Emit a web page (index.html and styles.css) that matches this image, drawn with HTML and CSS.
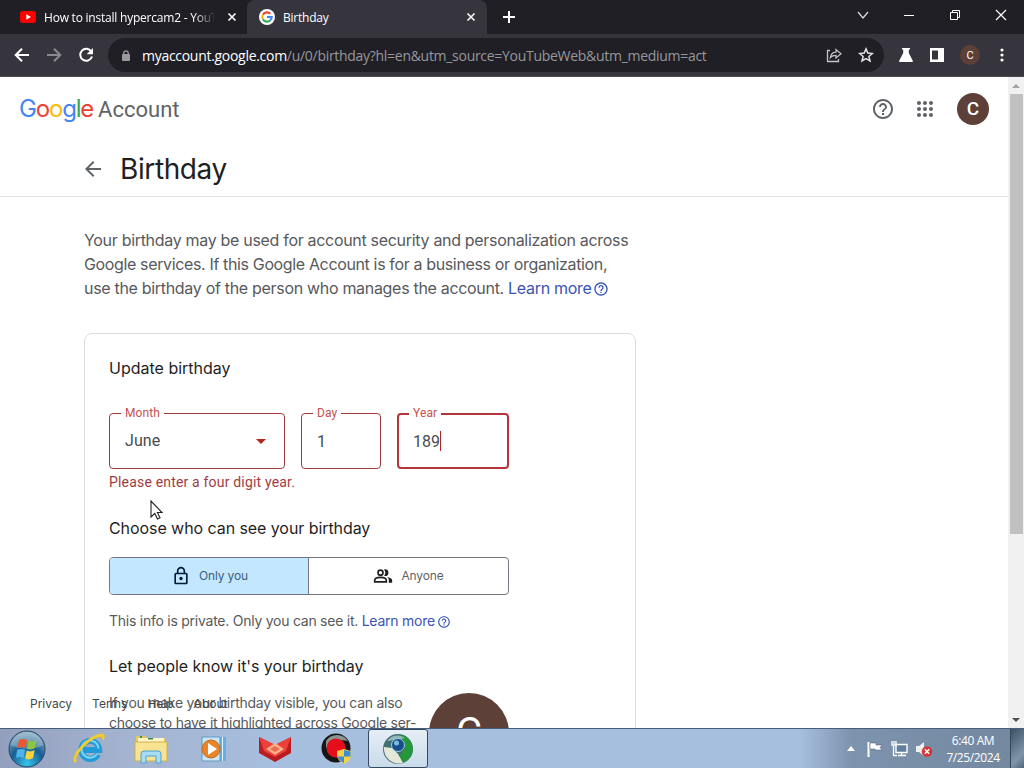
FILE: index.html
```html
<!DOCTYPE html>
<html lang="en">
<head>
	<meta charset="UTF-8" />
	<title>Birthday</title>
	<link rel="stylesheet" href="styles.css">
</head>
<body>
	<div class="tabs">
		<div class="tab">
			<svg class="favicon" width="16" height="16" viewBox="0 0 16 16"><rect y="2" width="16" height="12" rx="3" fill="#f00"/><path d="M6.3 5.3v5.4L11 8z" fill="#fff"/></svg>
			<span class="tab-name tab-cut">How to install hypercam2 - YouTube</span>
			<svg class="tab-close" width="10" height="10" viewBox="0 0 10 10"><path d="M1.500 1.500l7 7M8.500 1.500l-7 7" stroke="#fff" stroke-width="1.600"/></svg>
		</div>
		<div class="tab active">
			<svg class="favicon" width="16" height="16" viewBox="0 0 16 16"><circle cx="8" cy="8" r="8" fill="#fff"/><g fill="none" stroke-width="2.200"><path d="M11.300 4.700A4.700 4.700 0 0 0 3.900 5.700" stroke="#ea4335"/><path d="M3.900 5.700a4.700 4.700 0 0 0 0 4.600" stroke="#fbbc05"/><path d="M3.900 10.300a4.700 4.700 0 0 0 7.200 1.200" stroke="#34a853"/><path d="M11.100 11.500A4.700 4.700 0 0 0 12.700 8H8" stroke="#4285f4"/></g></svg>
			<span class="tab-name">Birthday</span>
			<svg class="tab-close" width="10" height="10" viewBox="0 0 10 10"><path d="M1.500 1.500l7 7M8.500 1.500l-7 7" stroke="#fff" stroke-width="1.600"/></svg>
		</div>
		<svg class="new-tab" width="12" height="12" viewBox="0 0 12 12"><path d="M6 0v12M0 6h12" stroke="#fff" stroke-width="2"/></svg>
		<div class="window-buttons">
			<svg width="12" height="12" viewBox="0 0 12 12"><path d="M1 3l5 6 5-6" fill="none" stroke="#ddd" stroke-width="1.200"/></svg>
			<svg width="12" height="12" viewBox="0 0 12 12"><path d="M1 6.500h10" stroke="#fff"/></svg>
			<svg width="12" height="12" viewBox="0 0 12 12"><path d="M1.500 3.500h7v7h-7zM3.500 3.500v-2h7v7h-2" fill="none" stroke="#fff"/></svg>
			<svg width="12" height="12" viewBox="0 0 12 12"><path d="M1 1l10 10M11 1L1 11" stroke="#fff" stroke-width="1.200"/></svg>
		</div>
	</div>

	<div class="toolbar">
		<div class="nav">
			<svg width="16" height="16" viewBox="0 0 16 16"><path d="M15 8H2M8 1.700L1.700 8 8 14.300" fill="none" stroke="#fff" stroke-width="2"/></svg>
			<svg width="16" height="16" viewBox="0 0 16 16"><path d="M1 8h13M8 1.700L14.300 8 8 14.300" fill="none" stroke="#8a8a8e" stroke-width="2"/></svg>
			<svg width="16" height="16" viewBox="0 0 16 16"><path d="M13.300 4.500A6 6 0 1 0 14 9.500" fill="none" stroke="#fff" stroke-width="2"/><path d="M15 1v6.300H8.700z" fill="#fff"/></svg>
		</div>
		<div class="address">
			<svg class="lock" width="8" height="11" viewBox="0 0 8 11"><rect y="4" width="8" height="7" rx="1" fill="#9b9b9f"/><path d="M1.800 5V3a2.200 2.200 0 0 1 4.400 0v2" fill="none" stroke="#9b9b9f" stroke-width="1.300"/></svg>
			<span class="url"><b>myaccount.google.com</b>/u/0/birthday?hl=en&amp;utm_source=YouTubeWeb&amp;utm_medium=act</span>
			<svg class="share" width="16" height="16" viewBox="0 0 16 16"><path d="M4 3.500H1.500v11h11V12" fill="none" stroke="#c4c4c8" stroke-width="1.300"/><path d="M4.300 10.500C5 7 7 5.200 10 5.200V2.500L15 6.800 10 11V8.300c-2.500 0-4.300.6-5.700 2.200z" fill="none" stroke="#c4c4c8" stroke-width="1.200"/></svg>
			<svg width="16" height="16" viewBox="0 0 16 16"><path d="M8 1.900l1.800 4.200 4.600.4-3.500 3 1.100 4.500-4-2.400L4 14l1.100-4.500-3.500-3 4.600-.4z" fill="none" stroke="#e3e3e6" stroke-width="1.500"/></svg>
		</div>
		<div class="extensions">
			<svg width="16" height="16" viewBox="0 0 16 16"><path d="M4 1h8v1.500h-1.200V6l3.900 7.500c.5 1-.1 1.500-1 1.500H2.300c-.9 0-1.500-.5-1-1.500L5.200 6V2.500H4z" fill="#fff"/></svg>
			<svg width="16" height="16" viewBox="0 0 16 16"><path d="M1 1h14v14H1z" fill="#fff"/><path d="M3 3.500h6v9H3z" fill="#36353d"/></svg>
			<span class="small-avatar">C</span>
			<svg width="16" height="16" viewBox="0 0 16 16" fill="#fff"><circle cx="8" cy="3" r="1.600"/><circle cx="8" cy="8" r="1.600"/><circle cx="8" cy="13" r="1.600"/></svg>
		</div>
	</div>

	<div class="viewport">
		<div class="page">
			<header class="header">
				<div class="logo"><span class="google"><i class="blue">G</i><i class="red">o</i><i class="yellow">o</i><i class="blue">g</i><i class="green">l</i><i class="red">e</i></span><span class="account">Account</span></div>
				<div class="header-icons">
					<svg width="24" height="24" viewBox="0 0 24 24" fill="#5f6368"><path d="M11 18h2v-2h-2v2zm1-16C6.480 2 2 6.480 2 12s4.480 10 10 10 10-4.480 10-10S17.520 2 12 2zm0 18c-4.410 0-8-3.590-8-8s3.590-8 8-8 8 3.590 8 8-3.590 8-8 8zm0-14c-2.210 0-4 1.790-4 4h2c0-1.100.9-2 2-2s2 .9 2 2c0 2-3 1.750-3 5h2c0-2.250 3-2.500 3-5 0-2.210-1.790-4-4-4z"/></svg>
					<svg width="24" height="24" viewBox="0 0 24 24" fill="#5f6368"><path d="M6,8c1.100,0 2,-0.900 2,-2s-0.900,-2 -2,-2 -2,0.900 -2,2 0.900,2 2,2zM12,20c1.100,0 2,-0.900 2,-2s-0.900,-2 -2,-2 -2,0.900 -2,2 0.900,2 2,2zM6,20c1.100,0 2,-0.900 2,-2s-0.900,-2 -2,-2 -2,0.900 -2,2 0.900,2 2,2zM6,14c1.100,0 2,-0.900 2,-2s-0.900,-2 -2,-2 -2,0.900 -2,2 0.900,2 2,2zM12,14c1.100,0 2,-0.900 2,-2s-0.900,-2 -2,-2 -2,0.900 -2,2 0.900,2 2,2zM16,6c0,1.100 0.900,2 2,2s2,-0.900 2,-2 -0.900,-2 -2,-2 -2,0.900 -2,2zM12,8c1.100,0 2,-0.900 2,-2s-0.900,-2 -2,-2 -2,0.900 -2,2 0.900,2 2,2zM18,14c1.100,0 2,-0.900 2,-2s-0.900,-2 -2,-2 -2,0.900 -2,2 0.900,2 2,2zM18,20c1.100,0 2,-0.900 2,-2s-0.900,-2 -2,-2 -2,0.900 -2,2 0.900,2 2,2z"/></svg>
					<span class="avatar">C</span>
				</div>
			</header>
			<div class="title-row">
				<svg width="24" height="24" viewBox="0 0 24 24"><path d="M20 11H7.830l5.590-5.590L12 4l-8 8 8 8 1.410-1.410L7.830 13H20v-2z" fill="#5f6368"/></svg>
				<h1>Birthday</h1>
			</div>

			<main>
				<p class="intro">Your birthday may be used for account security and personalization across<br><span class="tight">Google services. If this Google Account is for a business or organization,</span><br>use the birthday of the person who manages the account. <a>Learn more</a><svg class="help" width="16" height="16" viewBox="0 0 24 24"><path d="M11 18h2v-2h-2v2zm1-16C6.480 2 2 6.480 2 12s4.480 10 10 10 10-4.480 10-10S17.520 2 12 2zm0 18c-4.410 0-8-3.590-8-8s3.590-8 8-8 8 3.590 8 8-3.590 8-8 8zm0-14c-2.210 0-4 1.790-4 4h2c0-1.100.9-2 2-2s2 .9 2 2c0 2-3 1.750-3 5h2c0-2.250 3-2.500 3-5 0-2.210-1.790-4-4-4z"/></svg></p>

				<section class="card">
					<h2 class="h-update">Update birthday</h2>
					<div class="fields">
						<div class="field month"><label>Month</label><span>June</span><i class="arrow"></i></div>
						<div class="field day"><label>Day</label><span>1</span></div>
						<div class="field year"><label>Year</label><span>189</span><i class="caret"></i></div>
					</div>
					<div class="error">Please enter a four digit year.</div>

					<h2 class="h-choose">Choose who can see your birthday</h2>
					<div class="switch">
						<div class="option selected">
							<svg width="20" height="20" viewBox="0 0 24 24" fill="#001d35"><path d="M18 8h-1V6c0-2.760-2.240-5-5-5S7 3.240 7 6v2H6c-1.100 0-2 .9-2 2v10c0 1.100.9 2 2 2h12c1.100 0 2-.9 2-2V10c0-1.100-.9-2-2-2zM9 6c0-1.660 1.340-3 3-3s3 1.340 3 3v2H9V6zm9 14H6V10h12v10zm-6-3c1.100 0 2-.9 2-2s-.9-2-2-2-2 .9-2 2 .9 2 2 2z"/></svg>
							<span>Only you</span>
						</div>
						<div class="option">
							<svg width="20" height="20" viewBox="0 0 24 24"><g fill="none" stroke="#1f1f1f" stroke-width="2"><circle cx="9" cy="8" r="3"/><path d="M2 19v-1.700C2 14.500 6 13.700 9 13.700s7 .8 7 3.600V19z"/></g><path d="M14.500 12a4 4 0 0 0 0-8c-.5 0-.9.1-1.300.2a6 6 0 0 1 0 7.600c.4.100.8.200 1.300.200zM17 13.300c1.300.9 2 2.200 2 4V20h4v-2.700c0-2.200-3-3.500-6-4z" fill="#1f1f1f"/></svg>
							<span>Anyone</span>
						</div>
					</div>
					<p class="info">This info is private. Only you can see it. <a>Learn more</a><svg class="help" width="14" height="14" viewBox="0 0 24 24"><path d="M11 18h2v-2h-2v2zm1-16C6.480 2 2 6.480 2 12s4.480 10 10 10 10-4.480 10-10S17.520 2 12 2zm0 18c-4.410 0-8-3.590-8-8s3.590-8 8-8 8 3.590 8 8-3.590 8-8 8zm0-14c-2.210 0-4 1.790-4 4h2c0-1.100.9-2 2-2s2 .9 2 2c0 2-3 1.750-3 5h2c0-2.250 3-2.500 3-5 0-2.210-1.790-4-4-4z"/></svg></p>

					<h2 class="h-let">Let people know it's your birthday</h2>
					<div class="highlight">
						<p>If you make your birthday visible, you can also<br>choose to have it highlighted across Google ser-</p>
						<span class="big-avatar">C</span>
					</div>
				</section>
			</main>

			<footer class="footer"><a>Privacy</a><a>Terms</a><a>Help</a><a>About</a></footer>
			<!-- mouse pointer -->
			<svg class="pointer" width="14" height="22" viewBox="0 0 14 22"><path d="M1 1v16l3.800-3.500L7.500 19l2.500-1.200-2.600-5.300H12z" fill="#fff" stroke="#222" stroke-width="1.100"/></svg>
		</div>
		<div class="scrollbar">
			<i class="up"></i>
			<div class="thumb"></div>
			<i class="down"></i>
		</div>
	</div>

	<div class="taskbar">
		<div class="task start">
			<svg width="38" height="38" viewBox="0 0 38 38">
				<defs>
					<radialGradient id="orb" cx=".5" cy=".9" r=".9"><stop offset="0" stop-color="#35c6ee"/><stop offset=".5" stop-color="#175d92"/><stop offset="1" stop-color="#8fb0c4"/></radialGradient>
				</defs>
				<circle cx="19" cy="19" r="18" fill="url(#orb)" stroke="#254968"/>
				<path d="M2.500 15a17 17 0 0 1 33 0c-9 5-22 5-33 0z" fill="#fff" opacity=".25"/>
				<path d="M11 10q4-2 8 0l-1.500 8q-4-2-8 0z" fill="#f0562b"/><path d="M20.500 10.500q4 2 8-.5L27 18q-4 2.500-8 .5z" fill="#8cc63e"/>
				<path d="M9 20q4-2 8 0l-1.500 8q-4-2-7.500 0z" fill="#4fb3ec"/><path d="M18.700 20.500q4 2 8-.5L25 28q-4 2.500-7.800.5z" fill="#fdd23c"/>
			</svg>
		</div>
		<div class="task">
			<svg width="34" height="32" viewBox="0 0 34 32"><path d="M26 21.500A9 9 0 1 1 27.200 17H12" fill="none" stroke="#239bd8" stroke-width="6"/><path d="M25 21A8.500 8.500 0 1 1 26.500 15.500" fill="none" stroke="#7bd6f6" stroke-width="2"/><path d="M4 29C-2 24 17 3 30 2c2 .3 1.500 3 .5 4.500" fill="none" stroke="#f1ca2d" stroke-width="2.800"/></svg>
		</div>
		<div class="task">
			<svg width="34" height="32" viewBox="0 0 34 32"><path d="M2 5V3h9l2 2h18v23H2z" fill="#e4c763"/><path d="M4 5h26v8H4z" fill="#fff7c6"/><path d="M1 9h32v19H1z" fill="#f8e392" stroke="#cfb04f"/><path d="M7 30v-9q0-3 3-3h14q3 0 3 3v9h-5v-7H12v7z" fill="#a7dcf5" stroke="#4da1d0"/><path d="M6 3h2v2H6zM14 5h5v1.500h-5z" fill="#3a8d46"/></svg>
		</div>
		<div class="task">
			<svg width="32" height="30" viewBox="0 0 32 30"><path d="M8 3h21v24H8z" fill="#66afe0"/><path d="M5 3h18v24H5z" fill="#c9e6f8" stroke="#609abf"/><path d="M25.500 3v24" stroke="#e5f5ff"/><circle cx="14" cy="15" r="9" fill="#e98526" stroke="#c46b1e"/><path d="M11 9v12l9-6z" fill="#fff"/></svg>
		</div>
		<div class="task">
			<svg width="34" height="28" viewBox="0 0 34 28"><path d="M1 2l16 8 16-8v16L17 27 1 18z" fill="#b91d22"/><path d="M1 2l16 8 16-8-5 14-11 6-11-6z" fill="#ec4138"/><path d="M8 14l9-6 9 6-9 6z" fill="#ffb08a"/><path d="M12 14l5-3 5 3-5 3z" fill="#e96b50"/></svg>
		</div>
		<div class="task">
			<svg width="32" height="32" viewBox="0 0 32 32"><circle cx="15" cy="15" r="14.500" fill="#171717"/><path d="M5 8A13 13 0 0 1 27 8q-11-3-22 7z" fill="#8b9692"/><circle cx="15" cy="15" r="9.500" fill="#e80d1a"/><path d="M23 16l7 2v5q-1 5-7 8-6-3-7-8v-5z" fill="#f1d34a"/><path d="M23 17v6.500h6.500V18.500zM23 23.500V30q-5-2.500-6.300-6.500z" fill="#3e8cd4"/></svg>
		</div>
		<div class="task open">
			<svg width="32" height="32" viewBox="0 0 32 32"><circle cx="16" cy="16" r="15" fill="#416f74"/><path d="M17 2a14 14 0 0 1 5 27l-6-3 7-11z" fill="#26983b"/><path d="M2 14l8 1 6 6 5 9A15 15 0 0 1 2 14z" fill="#e5e7d9"/><path d="M5 8Q13-1 23 5L14 7z" fill="#91b7b6"/><circle cx="16" cy="12" r="6.500" fill="#174f8b" stroke="#9fcbdc"/><circle cx="14.500" cy="10" r="2.500" fill="#7eb9e4"/></svg>
		</div>
		<div class="tray">
			<svg width="8" height="5" viewBox="0 0 8 5"><path d="M0 5l4-5 4 5z" fill="#fff"/></svg>
			<svg class="flag" width="18" height="16" viewBox="0 0 18 16"><path d="M2.500 1v15" stroke="#fff" stroke-width="2"/><path d="M4 2h6v2h6l-2 2.500L16 9H9V8H4z" fill="#fff" stroke="#455b70" stroke-width=".5"/></svg>
			<svg class="network" width="17" height="17" viewBox="0 0 17 17"><path d="M5 4.500h11v8H5z" fill="#5f7f9c" stroke="#fff" stroke-width="1.400"/><path d="M10.500 13v2.500M7 15.500h8M2.500 6v9.500H6M1 1v4h4V1M3 1v3" fill="none" stroke="#fff" stroke-width="1.300"/></svg>
			<svg class="sound" width="17" height="16" viewBox="0 0 17 16"><path d="M0 5h3l5-4v14l-5-4H0z" fill="#eee"/><circle cx="11" cy="10.500" r="5.300" fill="#d4363a"/><path d="M8.800 8.300l4.400 4.400M13.200 8.300l-4.400 4.400" stroke="#fff" stroke-width="1.500"/></svg>
			<div class="clock"><span>6:40 AM</span><span>7/25/2024</span></div>
			<div class="show-desktop"></div>
		</div>
	</div>
</body>
</html>
```
FILE: styles.css
```css
* {
	box-sizing: border-box;
}

body {
	margin: 0;
	height: 768px;
	display: flex;
	flex-direction: column;
	overflow: hidden;
	background: #fff;
	color: #1f1f1f;
	font-family: Inter, "Liberation Sans", sans-serif;
}

svg {
	display: block;
	flex: none;
}

h1, h2, p {
	margin: 0;
	font-weight: 400;
}

i {
	font-style: normal;
}

/* browser window */
.tabs {
	height: 34px;
	flex: none;
	display: flex;
	align-items: center;
	background: #201f26;
	color: #fff;
	font: 500 12px "Open Sans", sans-serif;
	letter-spacing: -0.22px;
}

.tab {
	width: 247px;
	height: 34px;
	padding: 0 11px 0 20px;
	display: flex;
	align-items: center;
}

.tab.active {
	width: 240px;
	padding: 0 11px 0 12px;
	background: #36353d;
	border-radius: 8px 8px 0 0;
}

.tab-name {
	flex: 1;
	margin-left: 8px;
	white-space: nowrap;
	overflow: hidden;
}

.tab-cut {
	flex: none;
	width: 170px;
	margin-right: 13px;
	-webkit-mask-image: linear-gradient(90deg, #000 150px, transparent 172px);
	mask-image: linear-gradient(90deg, #000 150px, transparent 172px);
}

.new-tab {
	margin-left: 16px;
}

.window-buttons {
	margin-left: auto;
	margin-right: 17px;
	margin-bottom: 5px;
	display: flex;
	gap: 34px;
}

.toolbar {
	height: 43px;
	flex: none;
	display: flex;
	align-items: center;
	background: #36353d;
	border-bottom: 1px solid #4b4a51;
}

.nav {
	width: 108px;
	padding-left: 14px;
	display: flex;
	gap: 16px;
}

.address {
	width: 776px;
	height: 34px;
	padding: 0 10px 0 14px;
	display: flex;
	align-items: center;
	border-radius: 17px;
	background: #201f26;
	font: 14px "Open Sans", sans-serif;
	letter-spacing: -0.29px;
	color: #97979b;
}

.url {
	margin-left: 12px;
	white-space: nowrap;
}

.url b {
	font-weight: 400;
	color: #fff;
}

.share {
	margin-left: auto;
	margin-right: 16px;
}

.extensions {
	display: flex;
	align-items: center;
	margin-left: 14px;
	gap: 15px;
}

.small-avatar, .avatar, .big-avatar {
	display: flex;
	align-items: center;
	justify-content: center;
	flex: none;
	border-radius: 50%;
	background: #5d4037;
	color: #fff;
	font-family: Roboto, sans-serif;
}

.small-avatar {
	width: 20px;
	height: 20px;
	font-size: 11px;
	margin-right: -1px;
}

/* account page */
.viewport {
	flex: 1;
	min-height: 0;
	display: flex;
}

.page {
	position: relative;
	width: 1008px;
	height: 651px;
	overflow: hidden;
}

.header {
	height: 64px;
	padding: 0 19px 1px;
	display: flex;
	align-items: center;
	justify-content: space-between;
}

.logo {
	display: flex;
	align-items: baseline;
	gap: 5px;
	color: #5f6368;
	font-size: 22px;
}

.google {
	font-size: 24px;
	letter-spacing: -1.2px;
}

.account {
	font-family: Roboto, sans-serif;
}

.blue { color: #4285f4; }
.red { color: #ea4335; }
.yellow { color: #fbbc05; }
.green { color: #34a853; }

.header-icons {
	display: flex;
	align-items: center;
	gap: 18px;
}

.avatar {
	width: 32px;
	height: 32px;
	margin-left: 2px;
	font-size: 19px;
	font-weight: 500;
}

.title-row {
	height: 56px;
	padding-left: 81px;
	display: flex;
	align-items: center;
	gap: 15px;
	border-bottom: 1px solid #dfe1e5;
}

h1 {
	font-size: 28px;
	letter-spacing: -0.4px;
}

.intro {
	padding: 31px 0 0 84px;
	height: 136px;
	font-size: 16px;
	line-height: 24px;
	letter-spacing: -0.31px;
	white-space: nowrap;
}

.tight {
	letter-spacing: -0.36px;
}

.intro, .info, .highlight p {
	color: #57595c;
}

a {
	color: #3a54b4;
}

.help {
	display: inline-block;
	vertical-align: -3px;
	margin-left: 2px;
	fill: #3a54b4;
}

.card {
	margin-left: 84px;
	width: 552px;
	height: 500px;
	padding: 22px 24px;
	border: 1px solid #dadce0;
	border-radius: 8px;
}

h2 {
	font-size: 16px;
	line-height: 24px;
	letter-spacing: -0.07px;
	white-space: nowrap;
}

.h-update {
	letter-spacing: 0;
}

.fields {
	display: flex;
	gap: 16px;
	margin-top: 33px;
	font-family: Roboto, sans-serif;
}

.field {
	position: relative;
	height: 56px;
	padding: 0 15px;
	display: flex;
	align-items: center;
	border: 1px solid #a33a3a;
	border-radius: 4px;
	font-size: 16px;
	color: #4a4c50;
}

.field label {
	position: absolute;
	top: -9px;
	left: 11px;
	padding: 0 4px;
	background: #fff;
	color: #c5504e;
	font-size: 12px;
	line-height: 16px;
	letter-spacing: 0.1px;
}

.month {
	width: 176px;
	justify-content: space-between;
}

.month span {
	padding-bottom: 2px;
	letter-spacing: 0.1px;
}

.day {
	width: 80px;
}

.year {
	width: 112px;
	padding: 0 14px;
	border: 2px solid #b6353d;
}

.year label {
	top: -10px;
	left: 10px;
}

.arrow {
	margin-right: 3px;
	border: 5px solid transparent;
	border-top-color: #b3261e;
	border-bottom: 0;
}

.caret {
	width: 1px;
	height: 20px;
	background: #b3261e;
}

.error {
	margin-top: 5px;
	font: 14px/16px Roboto, sans-serif;
	letter-spacing: 0.18px;
	color: #a23b42;
}

.h-choose {
	margin-top: 26px;
}

.switch {
	width: 400px;
	height: 38px;
	margin-top: 17px;
	display: flex;
	border: 1px solid #74777f;
	border-radius: 4px;
	overflow: hidden;
	font-size: 12px;
	letter-spacing: -0.15px;
}

.option {
	flex: 1;
	padding-bottom: 1px;
	display: flex;
	align-items: center;
	justify-content: center;
	gap: 8px;
	color: #5f6368;
}

.selected {
	flex: none;
	width: 199px;
	padding-left: 1px;
	background: #c2e7ff;
	border-right: 1px solid #74777f;
	color: #41617a;
}

.info {
	margin-top: 16px;
	font-size: 14px;
	line-height: 20px;
	letter-spacing: -0.25px;
	white-space: nowrap;
}

.h-let {
	margin-top: 23px;
}

.highlight {
	display: flex;
	width: 400px;
	margin-top: 15px;
	justify-content: space-between;
	font-size: 14px;
	line-height: 20px;
	letter-spacing: -0.27px;
	white-space: nowrap;
}

.highlight p {
	width: 310px;
}

.big-avatar {
	width: 80px;
	height: 80px;
	font-size: 40px;
}

/* stays at the bottom of the window, over the card */
.footer {
	position: absolute;
	left: 30px;
	bottom: 16px;
	display: flex;
	gap: 20px;
	font-size: 12px;
	line-height: 16px;
}

.footer a {
	color: #444746;
}

.pointer {
	position: absolute;
	left: 150px;
	top: 423px;
}

.scrollbar {
	width: 16px;
	padding: 7px 1px 6px;
	display: flex;
	flex-direction: column;
	align-items: center;
	background: #f1f1f1;
}

.up, .down {
	border: 4px solid transparent;
}

.up {
	border-top: 0;
	border-bottom-color: #a3a3a3;
}

.down {
	margin-top: auto;
	border-bottom: 0;
	border-top-color: #505050;
}

.thumb {
	width: 13px;
	height: 440px;
	margin-top: 6px;
	background: #c1c1c1;
}

/* taskbar */
.taskbar {
	height: 40px;
	flex: none;
	display: flex;
	border-top: 1px solid #465d7c;
	background: linear-gradient(90deg, #929fbd, #a3b3cf 120px, #a7bfdf 280px, #a7bfdf 800px, #7d94ae 850px, #73879e);
}

.task {
	width: 60px;
	margin-right: 2px;
	display: flex;
	align-items: center;
	justify-content: center;
}

.start {
	width: 54px;
	margin-right: 5px;
}

.task.open {
	width: 60px;
	margin-left: -1px;
	background: linear-gradient(#e6eef6, #c9dbea);
	border: 1px solid #34495f;
	border-radius: 3px;
}

.tray {
	margin-left: auto;
	display: flex;
	align-items: center;
}

.flag {
	margin-left: 11px;
}

.network {
	margin-left: 7px;
}

.sound {
	margin-left: 8px;
}

.clock {
	width: 74px;
	margin-left: 3px;
	display: flex;
	flex-direction: column;
	align-items: center;
	font: 12px/17px "Open Sans", sans-serif;
	letter-spacing: -0.4px;
	color: #fff;
}

.show-desktop {
	width: 14px;
	height: 39px;
	background: linear-gradient(135deg, #3e5266, #8195a9 70%, #4f6478);
	border-left: 1px solid #33475a;
}
```
